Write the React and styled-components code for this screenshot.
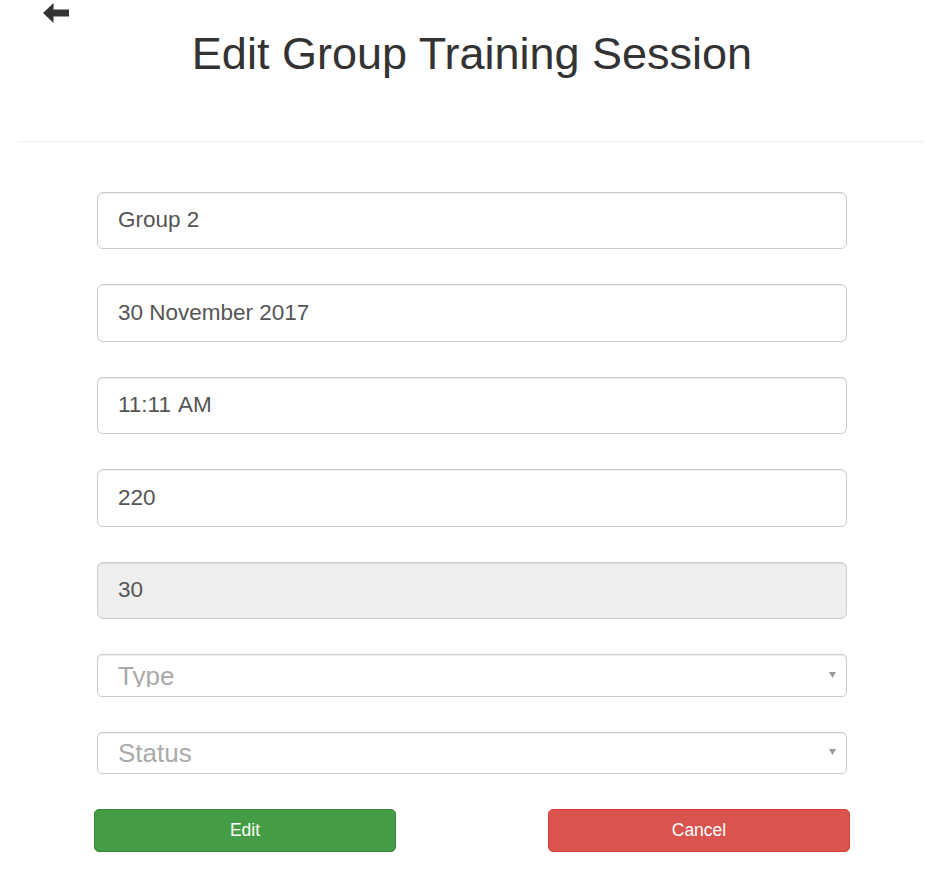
import React from "react";
import styled, { createGlobalStyle } from "styled-components";

const GlobalStyle = createGlobalStyle`
  html, body {
    margin: 0;
    padding: 0;
    background: #fff;
  }
  body {
    font-family: "Liberation Sans", Arial, sans-serif;
    color: #333;
  }
  * {
    box-sizing: border-box;
  }
`;

const fields = [
  { value: "Group 2" },
  { value: "30 November 2017" },
  { value: "11:11 AM", spaced: true },
  { value: "220" },
  { value: "30", disabled: true },
];

const selects = ["Type", "Status"];

const BackArrow = () => (
  <svg width="26" height="20" viewBox="0 0 26 20" aria-hidden="true">
    <path d="M0 10 L10.5 0 L10.5 6.4 L26 6.4 L26 13.6 L10.5 13.6 L10.5 20 Z" fill="#333" />
  </svg>
);

const Caret = () => (
  <svg width="7" height="6" viewBox="0 0 7 6" aria-hidden="true">
    <path d="M0 0 L7 0 L3.5 6 Z" fill="#9a9a9a" />
  </svg>
);

const App = () => {
  return (
    <>
      <GlobalStyle />
      <Page>
        <Header>
          <BackLink href="#">
            <BackArrow />
          </BackLink>
          <Title>Edit Group Training Session</Title>
        </Header>
        <Divider />
        <Form>
          {fields.map((f) => (
            <Input
              key={f.value}
              type="text"
              defaultValue={f.value}
              disabled={f.disabled}
              $spaced={f.spaced}
            />
          ))}
          {selects.map((s) => (
            <Select key={s}>
              <SelectValue>{s}</SelectValue>
              <Caret />
            </Select>
          ))}
          <Actions>
            <Button type="button" $variant="success">
              Edit
            </Button>
            <Button type="button" $variant="danger">
              Cancel
            </Button>
          </Actions>
        </Form>
      </Page>
    </>
  );
};

export default App;

const Page = styled.div`
  width: 942px;
  min-height: 871px;
  padding: 3px 18px 20px 18px;
`;

const Header = styled.header`
  display: flex;
  flex-direction: column;
`;

const BackLink = styled.a`
  display: block;
  width: 26px;
  height: 20px;
  margin-left: 25px;
  line-height: 0;
`;

const Title = styled.h1`
  margin: 5.5px 0 0 0;
  font-size: 45px;
  font-weight: 400;
  line-height: 49.5px;
  text-align: center;
  color: #333;
  padding-left: 2px;
`;

const Divider = styled.hr`
  margin: 62.5px 0 0 0;
  border: 0;
  border-top: 1px solid #eee;
  height: 0;
`;

const Form = styled.form`
  width: 750px;
  margin: 50px 0 0 79px;
  display: flex;
  flex-direction: column;
  gap: 35px;
`;

const Input = styled.input`
  display: block;
  width: 100%;
  height: 57.5px;
  padding: 0 20px;
  font-family: "Liberation Sans", Arial, sans-serif;
  font-size: 22.5px;
  word-spacing: ${(props) => (props.$spaced ? "2px" : "0")};
  color: #555;
  background: #fff;
  border: 1px solid #ccc;
  border-radius: 6px;
  box-shadow: inset 0 1px 1px rgba(0, 0, 0, 0.075);
  outline: none;

  &:disabled {
    background: #eee;
    color: #555;
    opacity: 1;
  }
`;

const Select = styled.div`
  display: flex;
  align-items: center;
  justify-content: space-between;
  height: 42.5px;
  padding: 7.5px 10px 8.5px 20px;
  border: 1px solid #ccc;
  border-radius: 5px;
  background: #fff;
  box-shadow: inset 0 1px 1px rgba(0, 0, 0, 0.075);
`;

const SelectValue = styled.div`
  flex: 1;
  height: 100%;
  overflow: hidden;
  font-size: 26px;
  line-height: 27.8px;
  color: #aaa;
`;

const Actions = styled.div`
  display: flex;
  justify-content: space-between;
  width: 756px;
  margin-left: -3px;
`;

const Button = styled.button`
  width: 302px;
  height: 42.5px;
  font-family: "Liberation Sans", Arial, sans-serif;
  font-size: 17.5px;
  color: #fff;
  border-radius: 5px;
  cursor: pointer;
  border: 1px solid
    ${(props) => (props.$variant === "success" ? "#398439" : "#d43f3a")};
  background: ${(props) =>
    props.$variant === "success" ? "#449d44" : "#d9534f"};
`;
